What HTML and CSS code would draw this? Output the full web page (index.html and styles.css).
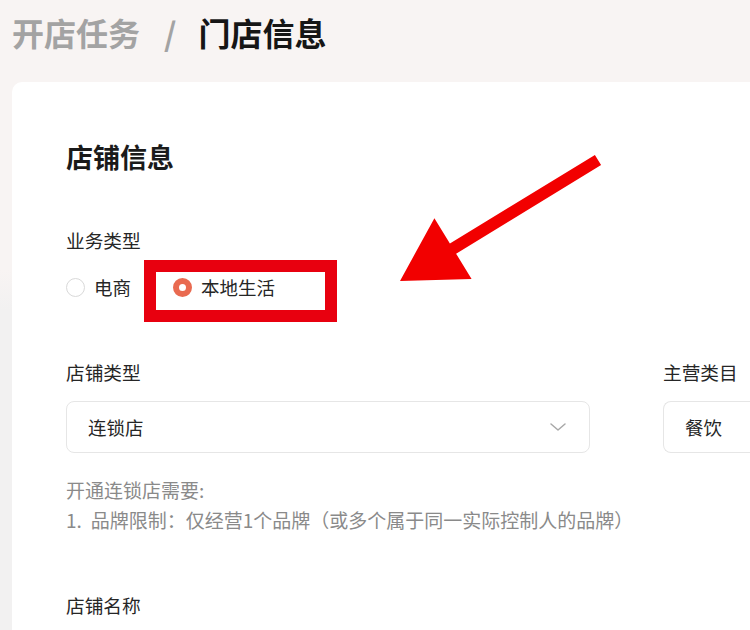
FILE: index.html
```html
<!DOCTYPE html>
<html lang="zh-CN">
<head>
<meta charset="utf-8">
<title>门店信息</title>
<link rel="stylesheet" href="styles.css">
</head>
<body>
  <header class="crumbs">
    <span class="crumb-prev">开店任务</span>
    <span class="crumb-sep">/</span>
    <span class="crumb-cur">门店信息</span>
  </header>

  <main class="card">
    <h2 class="card-title">店铺信息</h2>

    <section class="field field-biz">
      <div class="label">业务类型</div>
      <div class="radios">
        <label class="radio">
          <span class="radio-dot"></span>
          <span class="radio-text">电商</span>
        </label>
        <label class="radio radio-on">
          <span class="radio-dot"></span>
          <span class="radio-text">本地生活</span>
        </label>
      </div>
    </section>

    <section class="field-row">
      <div class="field field-type">
        <div class="label">店铺类型</div>
        <div class="select select-wide">
          <span class="select-value">连锁店</span>
          <svg class="chevron" width="18" height="10" viewBox="0 0 18 10" aria-hidden="true">
            <path d="M2 2 L9 8 L16 2" fill="none" stroke="#a8a8a8" stroke-width="1.5" stroke-linecap="round" stroke-linejoin="round"/>
          </svg>
        </div>
      </div>
      <div class="field field-cat">
        <div class="label">主营类目</div>
        <div class="select select-narrow">
          <span class="select-value">餐饮</span>
        </div>
      </div>
    </section>

    <div class="help">
      <p>开通连锁店需要:</p>
      <p><span class="help-num">1.</span>品牌限制：仅经营1个品牌（或多个属于同一实际控制人的品牌）</p>
    </div>

    <section class="field field-name">
      <div class="label">店铺名称</div>
    </section>
  </main>

  <div class="mark-box"></div>
  <svg class="mark-arrow" width="750" height="630" viewBox="0 0 750 630" aria-hidden="true">
    <polygon points="594.9,154.9 601.1,165.1 456.1,253.7 471.6,279 400,281 434.4,218.2 449.9,243.5" fill="#f20000"/>
  </svg>
</body>
</html>
```

FILE: styles.css
```css
* {
  box-sizing: border-box;
}

html, body {
  margin: 0;
  padding: 0;
}

body {
  width: 750px;
  height: 630px;
  overflow: hidden;
  position: relative;
  font-family: "Noto Sans CJK SC", "Noto Sans", sans-serif;
  color: #262626;
  background: linear-gradient(to bottom, #f8f4f3 0, #f8f4f3 270px, #f2f1f1 310px, #f2f1f1 100%);
}

.crumbs {
  height: 64px;
  display: flex;
  align-items: center;
  padding-left: 12px;
  font-size: 32px;
  font-weight: 700;
  line-height: 40px;
}

.crumb-prev {
  color: #a3a3a3;
}

.crumb-sep {
  color: #a3a3a3;
  margin: 0 22px 0 24px;
  font-weight: 700;
}

.crumb-cur {
  color: #161616;
}

.card {
  margin: 18px 0 0 12px;
  width: 738px;
  height: 548px;
  background: #ffffff;
  border-radius: 10px 0 0 0;
  padding: 60px 0 0 54px;
  overflow: hidden;
}

.card-title {
  margin: 0;
  font-size: 27px;
  line-height: 30px;
  font-weight: 700;
  color: #1a1a1a;
}

.label {
  font-size: 18.7px;
  line-height: 24px;
  color: #262626;
}

.field-biz {
  margin-top: 56px;
}

.radios {
  display: flex;
  align-items: center;
  margin-top: 23px;
  height: 24px;
}

.radio {
  display: flex;
  align-items: center;
  font-size: 18.5px;
  line-height: 24px;
  color: #262626;
  margin-right: 42px;
}

.radio-dot {
  width: 19px;
  height: 19px;
  border-radius: 50%;
  border: 1px solid #d9d9d9;
  background: #fff;
  margin-right: 9px;
  flex: none;
}

.radio-on .radio-dot {
  border: 6px solid #e96a50;
}

.field-row {
  display: flex;
  gap: 73px;
  margin-top: 61px;
}

.select {
  margin-top: 17px;
  height: 52px;
  border: 1px solid #e6e6e6;
  border-radius: 8px;
  display: flex;
  align-items: center;
  justify-content: space-between;
  padding: 0 22px 0 21px;
  font-size: 18.5px;
  color: #262626;
}

.select-wide {
  width: 524px;
}

.select-narrow {
  width: 87px;
  border-right: none;
  border-radius: 8px 0 0 8px;
  padding-right: 0;
}

.chevron {
  display: block;
}

.help {
  margin-top: 22px;
  font-size: 19px;
  line-height: 30px;
  color: #8a8a8a;
  white-space: nowrap;
}

.help p {
  margin: 0;
}

.help-num {
  margin-right: 9px;
}

.field-name {
  margin-top: 58px;
}

.mark-box {
  position: absolute;
  left: 144px;
  top: 260px;
  width: 193px;
  height: 62px;
  border: 12px solid #e8000f;
}

.mark-arrow {
  position: absolute;
  left: 0;
  top: 0;
  pointer-events: none;
}
```
